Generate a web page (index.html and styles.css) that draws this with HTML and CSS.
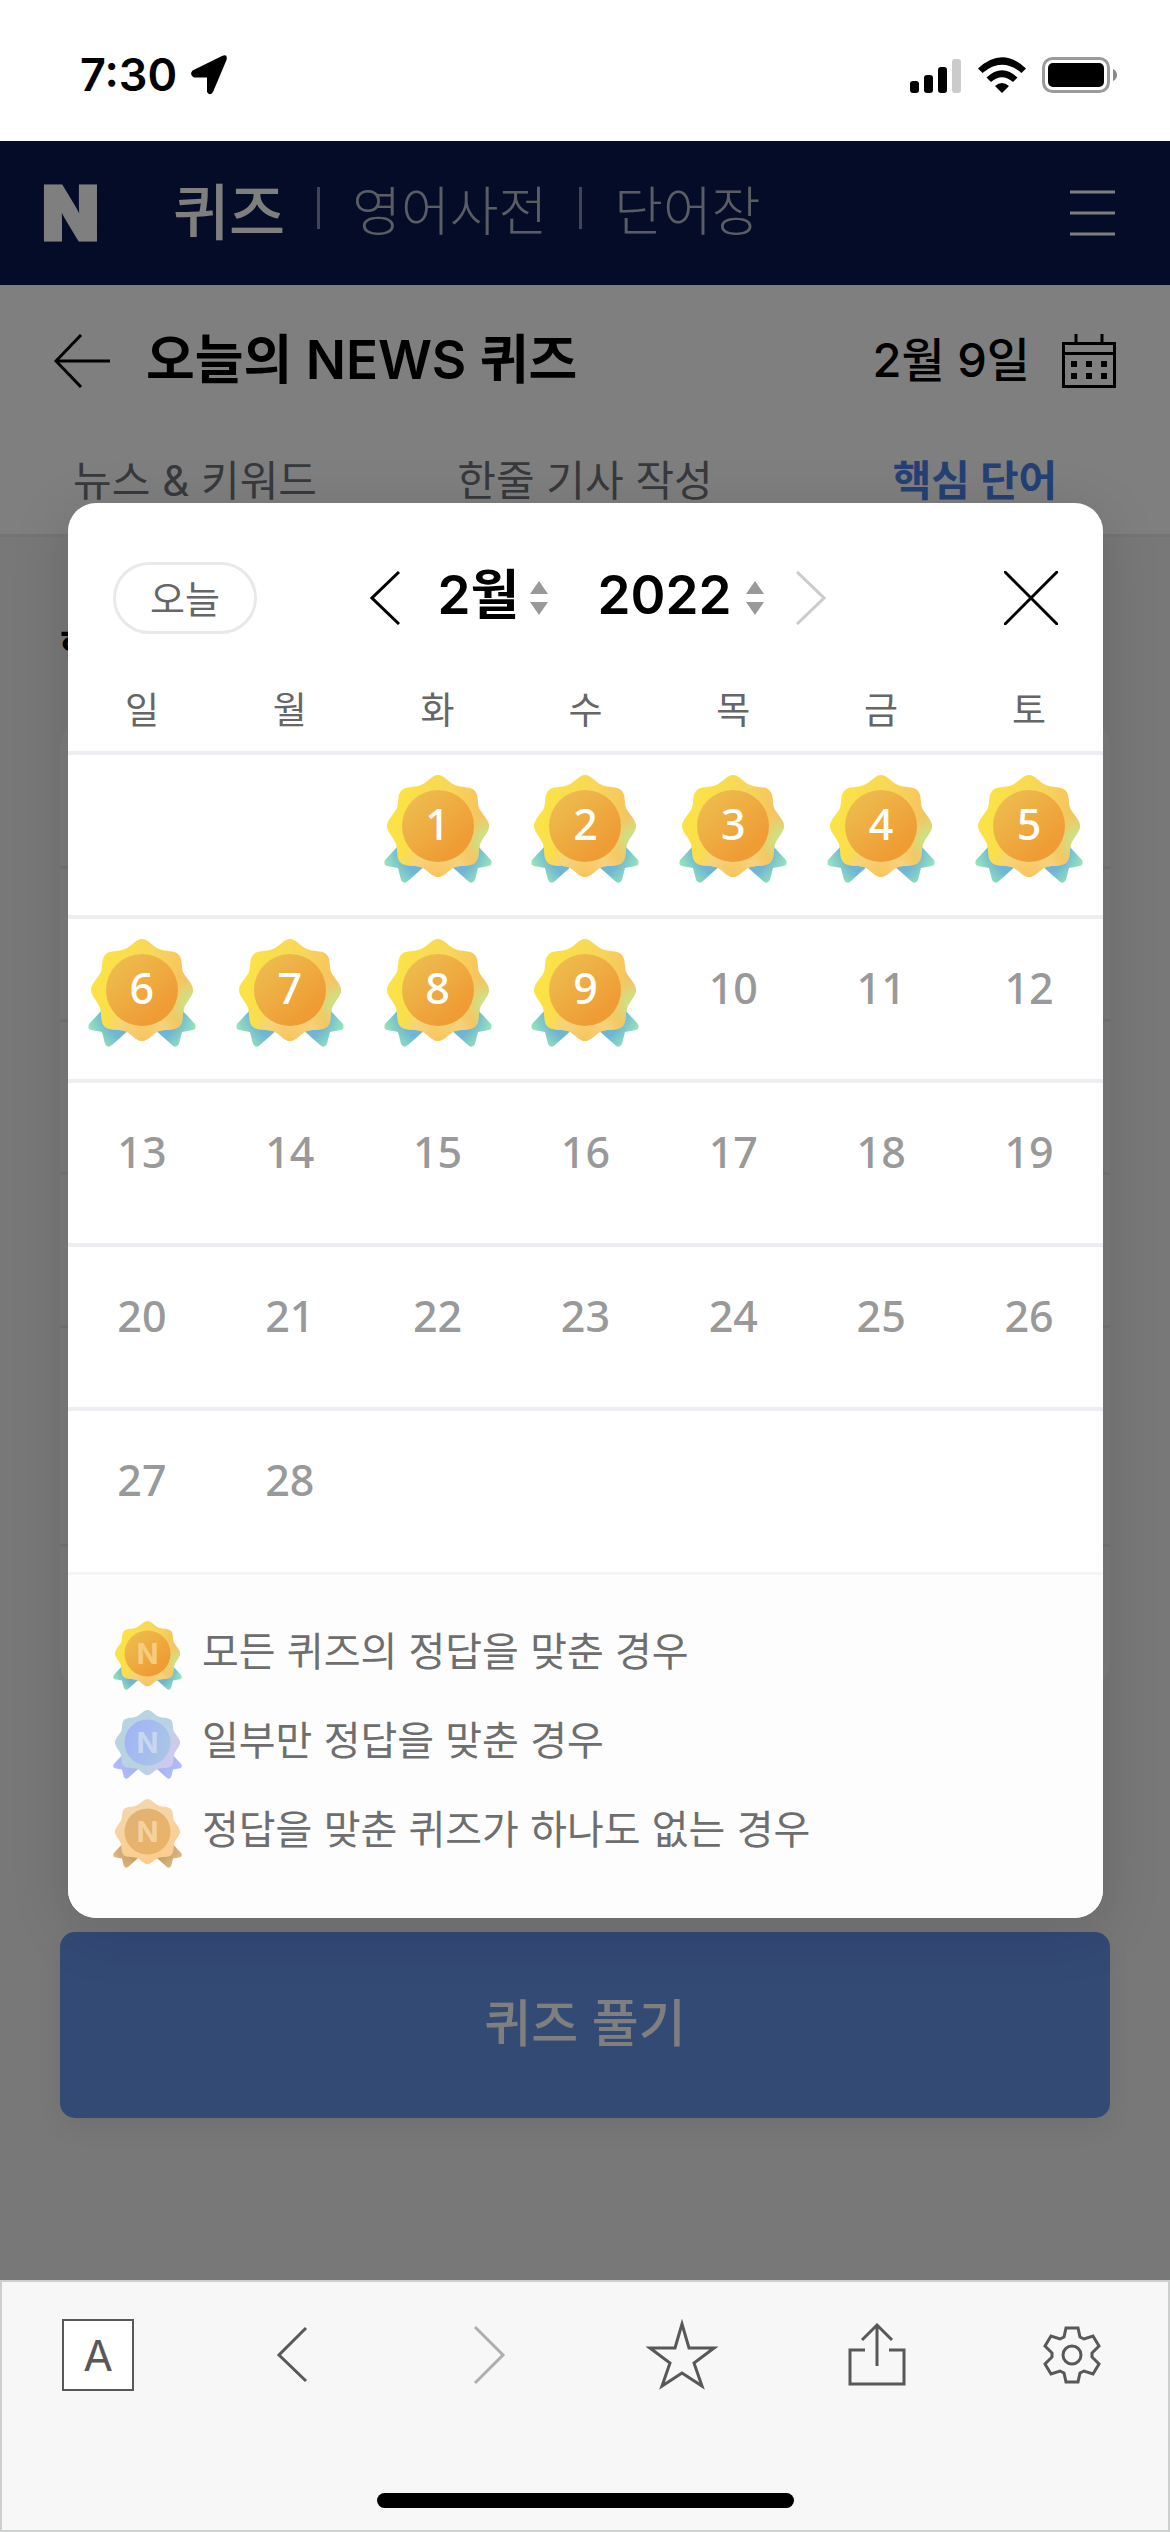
FILE: index.html
```html
<!DOCTYPE html>
<html lang="ko">
<head>
    <meta charset="UTF-8">
    <meta name="viewport" content="width=device-width, initial-scale=1.0">
    <title>오늘의 NEWS 퀴즈</title>
    <link rel="stylesheet" href="styles.css">
</head>
<body>

<!-- Medal shapes -->
<svg class="defs" width="0" height="0" aria-hidden="true">
    <defs>
        <path id="flower" d="M54 0C60 0 64 7 71 10C78 13 86 11 90 15C95 19 93 27 95 33C98 39 105 45 105 51C105 57 98 63 96 69C94 76 96 84 91 88C86 92 78 90 71 92C64 95 60 102 54 102C48 102 44 95 37 92C30 90 22 92 17 88C12 84 14 76 12 69C10 63 3 57 3 51C3 45 10 39 13 33C15 27 13 19 18 15C22 11 30 13 37 10C44 7 48 0 54 0Z"/>
        <path id="ribbons" d="M94 71L107 85Q109 90 105 91L94 93L91 105Q88 110 84 106L66 90ZM14 71L1 85Q-1 90 3 91L14 93L17 105Q20 110 24 106L42 90Z"/>

        <linearGradient id="gold-base" x1="0" y1="0.4" x2="1" y2="0.6">
            <stop offset="0.1" stop-color="#fbe246"/>
            <stop offset="0.55" stop-color="#f7d65a"/>
            <stop offset="0.9" stop-color="#f6c25e"/>
        </linearGradient>
        <radialGradient id="gold-green" cx="1" cy="0.64" r="0.32">
            <stop offset="0" stop-color="#b8ec90"/>
            <stop offset="0.3" stop-color="#cbe386" stop-opacity="0.9"/>
            <stop offset="1" stop-color="#f6c86a" stop-opacity="0"/>
        </radialGradient>
        <radialGradient id="gold-bottom" cx="0.5" cy="1" r="0.4">
            <stop offset="0" stop-color="#f8c45a"/>
            <stop offset="0.6" stop-color="#f6d27c"/>
            <stop offset="1" stop-color="#f6d27c" stop-opacity="0"/>
        </radialGradient>
        <linearGradient id="gold-disc" x1="0.1" y1="0.1" x2="0.8" y2="0.9">
            <stop offset="0" stop-color="#edbd4e"/>
            <stop offset="0.9" stop-color="#ef9c35"/>
        </linearGradient>
        <radialGradient id="gold-ribbon" gradientUnits="userSpaceOnUse" cx="54" cy="66" r="62">
            <stop offset="0.64" stop-color="#6fb6d6"/>
            <stop offset="0.94" stop-color="#98e6b8"/>
        </radialGradient>

        <linearGradient id="blue-base" x1="0" y1="0" x2="1" y2="0.5">
            <stop offset="0.7" stop-color="#b9d3e2"/>
            <stop offset="1" stop-color="#d0c8f0"/>
        </linearGradient>
        <linearGradient id="blue-disc" x1="0" y1="0.3" x2="1" y2="0.7">
            <stop offset="0" stop-color="#a2b3f8"/>
            <stop offset="1" stop-color="#aac6e4"/>
        </linearGradient>
        <radialGradient id="blue-ribbon" gradientUnits="userSpaceOnUse" cx="54" cy="66" r="62">
            <stop offset="0.55" stop-color="#a9b4ee"/>
            <stop offset="0.9" stop-color="#aebdff"/>
        </radialGradient>

        <linearGradient id="bronze-base" x1="0.4" y1="0" x2="0.6" y2="1">
            <stop offset="0" stop-color="#f4d8b0"/>
            <stop offset="1" stop-color="#fbcc8a"/>
        </linearGradient>
        <linearGradient id="bronze-disc" x1="0" y1="0" x2="1" y2="1">
            <stop offset="0" stop-color="#dfb376"/>
            <stop offset="1" stop-color="#edb266"/>
        </linearGradient>
        <radialGradient id="bronze-ribbon" gradientUnits="userSpaceOnUse" cx="54" cy="66" r="62">
            <stop offset="0.55" stop-color="#c89f68"/>
            <stop offset="0.9" stop-color="#dcb684"/>
        </radialGradient>
    </defs>
    <symbol id="medal-gold" viewBox="0 0 108 108">
        <use href="#ribbons" fill="url(#gold-ribbon)"/>
        <use href="#flower" fill="url(#gold-base)"/>
        <use href="#flower" fill="url(#gold-bottom)"/>
        <use href="#flower" fill="url(#gold-green)"/>
        <circle cx="54" cy="51" r="36" fill="url(#gold-disc)"/>
    </symbol>
    <symbol id="medal-blue" viewBox="0 0 108 108">
        <use href="#ribbons" fill="url(#blue-ribbon)"/>
        <use href="#flower" fill="url(#blue-base)"/>
        <circle cx="54" cy="51" r="36" fill="url(#blue-disc)"/>
    </symbol>
    <symbol id="medal-bronze" viewBox="0 0 108 108">
        <use href="#ribbons" fill="url(#bronze-ribbon)"/>
        <use href="#flower" fill="url(#bronze-base)"/>
        <circle cx="54" cy="51" r="36" fill="url(#bronze-disc)"/>
    </symbol>
</svg>

<div class="status-bar">
    <div class="status-time">
        <span>7:30</span>
        <svg width="36" height="40" viewBox="0 0 36 40"><path d="M31 1Q37 -1.500 35.500 5L22 37Q19 41.500 16 37V22.500H3Q-2 20 1.500 15.500Z"/></svg>
    </div>
    <div class="status-icons">
        <svg width="52" height="40" viewBox="0 0 52 40">
            <rect x="0" y="26" width="9" height="12" rx="3"/>
            <rect x="14" y="20" width="9" height="18" rx="3"/>
            <rect x="28" y="12" width="9" height="26" rx="3"/>
            <rect x="42" y="4" width="9" height="34" rx="3" fill="#cbcbcb"/>
        </svg>
        <svg width="48" height="40" viewBox="0 0 48 40">
            <path d="M0 13.500Q24 -9 48 13.500L43.500 18Q24 1.500 4.500 18ZM8.500 22.500Q24 8 39.500 22.500L35 27Q24 17.500 13 27ZM17 31Q24 25 31 31L24 38Z"/>
        </svg>
        <svg width="76" height="40" viewBox="0 0 76 40">
            <rect x="1.500" y="3.500" width="65" height="33" rx="9" fill="none" stroke="#9b9b9b" stroke-width="3"/>
            <rect x="6" y="8" width="56" height="24" rx="5"/>
            <path d="M71 14Q75 16 75 20T71 26Z" fill="#8a8a8a"/>
        </svg>
    </div>
</div>

<div class="screen">
    <header class="gnb">
        <a class="logo" href="#">N</a>
        <nav class="gnb-menu">
            <a class="active" href="#">퀴즈</a>
            <a href="#">영어사전</a>
            <a href="#">단어장</a>
        </nav>
        <button class="menu-btn" type="button" aria-label="메뉴">
            <svg width="46" height="46" viewBox="0 0 46 46" stroke="#fff" stroke-width="3"><path d="M0 2H45M0 23H45M0 44H45"/></svg>
        </button>
    </header>

    <div class="title-bar">
        <button type="button" aria-label="뒤로">
            <svg width="56" height="54" viewBox="0 0 56 54" fill="none" stroke="#000" stroke-width="3"><path d="M27 1L2 27L27 53M2 27H56"/></svg>
        </button>
        <h1>오늘의 NEWS 퀴즈</h1>
        <span class="today">2월 9일</span>
        <button type="button" aria-label="달력">
            <svg width="54" height="54" viewBox="0 0 54 54" fill="none" stroke="#000" stroke-width="3">
                <path d="M1.500 9.500H52.500V52.500H1.500ZM1.500 19.500H52.500M14 0V9M40 0V9"/>
                <path d="M9 30H15M24 30H30M39 30H45M9 42H15M24 42H30M39 42H45" stroke-width="6"/>
            </svg>
        </button>
    </div>

    <nav class="tabs">
        <a href="#">뉴스 &amp; 키워드</a>
        <a href="#">한줄 기사 작성</a>
        <a class="active" href="#">핵심 단어</a>
    </nav>

    <main class="content">
        <h2>핵심 단어</h2>
        <div class="word-list">
            <div class="word"></div>
            <div class="word"></div>
            <div class="word"></div>
            <div class="word"></div>
            <div class="word tall"></div>
            <div class="word"></div>
        </div>
        <button class="quiz-btn" type="button">퀴즈 풀기</button>
    </main>

    <!-- Calendar layer -->
    <div class="dim">
        <section class="calendar">
            <div class="cal-head">
                <button class="btn-today" type="button">오늘</button>
                <div class="cal-nav">
                    <button type="button" aria-label="이전 달">
                        <svg width="30" height="54" viewBox="0 0 30 54" fill="none" stroke="#000" stroke-width="3"><path d="M29 1L2 27L29 53"/></svg>
                    </button>
                    <div class="picker month">
                        <select aria-label="월"><option>2월</option></select>
                        <svg width="18" height="34" viewBox="0 0 18 34" fill="#999"><path d="M9 0L18 13H0ZM9 34L18 21H0Z"/></svg>
                    </div>
                    <div class="picker year">
                        <select aria-label="년"><option>2022</option></select>
                        <svg width="18" height="34" viewBox="0 0 18 34" fill="#999"><path d="M9 0L18 13H0ZM9 34L18 21H0Z"/></svg>
                    </div>
                    <button type="button" aria-label="다음 달">
                        <svg width="30" height="54" viewBox="0 0 30 54" fill="none" stroke="#ccc" stroke-width="3"><path d="M1 1L28 27L1 53"/></svg>
                    </button>
                </div>
                <button type="button" aria-label="닫기">
                    <svg width="54" height="54" viewBox="0 0 54 54" stroke="#000" stroke-width="3"><path d="M0 0L54 54M54 0L0 54"/></svg>
                </button>
            </div>

            <table>
                <thead>
                    <tr><th>일</th><th>월</th><th>화</th><th>수</th><th>목</th><th>금</th><th>토</th></tr>
                </thead>
                <tbody>
                    <tr>
                        <td></td>
                        <td></td>
                        <td><div class="medal"><svg><use href="#medal-gold"/></svg><span>1</span></div></td>
                        <td><div class="medal"><svg><use href="#medal-gold"/></svg><span>2</span></div></td>
                        <td><div class="medal"><svg><use href="#medal-gold"/></svg><span>3</span></div></td>
                        <td><div class="medal"><svg><use href="#medal-gold"/></svg><span>4</span></div></td>
                        <td><div class="medal"><svg><use href="#medal-gold"/></svg><span>5</span></div></td>
                    </tr>
                    <tr>
                        <td><div class="medal"><svg><use href="#medal-gold"/></svg><span>6</span></div></td>
                        <td><div class="medal"><svg><use href="#medal-gold"/></svg><span>7</span></div></td>
                        <td><div class="medal"><svg><use href="#medal-gold"/></svg><span>8</span></div></td>
                        <td><div class="medal"><svg><use href="#medal-gold"/></svg><span>9</span></div></td>
                        <td>10</td>
                        <td>11</td>
                        <td>12</td>
                    </tr>
                    <tr><td>13</td><td>14</td><td>15</td><td>16</td><td>17</td><td>18</td><td>19</td></tr>
                    <tr><td>20</td><td>21</td><td>22</td><td>23</td><td>24</td><td>25</td><td>26</td></tr>
                    <tr><td>27</td><td>28</td><td></td><td></td><td></td><td></td><td></td></tr>
                </tbody>
            </table>

            <ul class="legend">
                <li><div class="medal gold"><svg><use href="#medal-gold"/></svg><span>N</span></div>모든 퀴즈의 정답을 맞춘 경우</li>
                <li><div class="medal blue"><svg><use href="#medal-blue"/></svg><span>N</span></div>일부만 정답을 맞춘 경우</li>
                <li><div class="medal bronze"><svg><use href="#medal-bronze"/></svg><span>N</span></div>정답을 맞춘 퀴즈가 하나도 없는 경우</li>
            </ul>
        </section>
    </div>
</div>

<footer class="toolbar">
    <div class="toolbar-row">
        <button class="lang-btn" type="button">A</button>
        <button type="button" aria-label="뒤로 가기">
            <svg width="72" height="72" viewBox="0 0 72 72"><path d="M49 9L22 36L49 62"/></svg>
        </button>
        <button type="button" aria-label="앞으로 가기" disabled>
            <svg width="72" height="72" viewBox="0 0 72 72"><path d="M23 8L51 36L23 64"/></svg>
        </button>
        <button type="button" aria-label="즐겨찾기">
            <svg width="72" height="72" viewBox="0 0 72 72"><path d="M36 5L43 29H68L48 44L56 67L36 54L16 67L24 44L4 29H29Z"/></svg>
        </button>
        <button type="button" aria-label="공유">
            <svg width="72" height="72" viewBox="0 0 72 72"><path d="M24 31H9V65H63V31H48M36 47V6M21 21L36 6L51 21"/></svg>
        </button>
        <button type="button" aria-label="설정">
            <svg width="72" height="72" viewBox="0 0 72 72"><path d="M30 9H42L44 18L48 20L57 17L63 27L56 34V38L63 45L57 55L48 52L44 54L42 63H30L28 54L24 52L15 55L9 45L16 38V34L9 27L15 17L24 20L28 18Z"/><circle cx="36" cy="36" r="9"/></svg>
        </button>
    </div>
    <div class="home-indicator"></div>
</footer>

</body>
</html>
```
FILE: styles.css
```css
/* Global Styles */
* {
    margin: 0;
    padding: 0;
    box-sizing: border-box;
}

body {
    display: flex;
    flex-direction: column;
    min-height: 100vh;
    background-color: #fff;
    color: #000;
    font-family: Inter, "Noto Sans CJK KR", sans-serif;
}

a {
    color: inherit;
    text-decoration: none;
}

button,
select {
    font-family: inherit;
    color: inherit;
    background: none;
    border: none;
    cursor: pointer;
}

svg {
    display: block;
}

.defs {
    position: absolute;
}

/* Status bar */
.status-bar {
    display: flex;
    justify-content: space-between;
    align-items: center;
    height: 141px;
    padding: 8px 52px 0 80px;
}

.status-time {
    display: flex;
    align-items: center;
    gap: 14px;
    font-size: 45px;
    font-weight: 600;
}

.status-icons {
    display: flex;
    align-items: center;
    gap: 16px;
}

/* Page */
.screen {
    position: relative;
    flex: 1;
    background-color: #f1f1f2;
}

.gnb {
    display: flex;
    align-items: center;
    height: 144px;
    padding: 0 54px 0 42px;
    background-color: #0b1950;
    color: #fff;
}

.logo {
    font-size: 74px;
    font-weight: 900;
    -webkit-text-stroke: 3px #fff;
}

.gnb-menu {
    display: flex;
    align-items: center;
    flex: 1;
    padding: 0 0 10px 74px;
    font-size: 53px;
    font-weight: 300;
}

.gnb-menu a {
    opacity: 0.7;
}

.gnb-menu a + a {
    display: flex;
    align-items: center;
}

.gnb-menu a + a::before {
    content: "";
    width: 3px;
    height: 42px;
    margin: 0 32px;
    background-color: #fff;
    opacity: 0.7;
}

.gnb-menu .active {
    font-size: 61px;
    font-weight: 500;
    opacity: 1;
}

.title-bar {
    display: flex;
    align-items: center;
    height: 152px;
    padding: 0 54px;
    background-color: #fff;
}

.title-bar h1 {
    flex: 1;
    padding: 0 0 10px 36px;
    font-size: 53px;
    font-weight: 600;
}

.today {
    margin-right: 32px;
    padding-bottom: 10px;
    font-size: 47px;
    font-weight: 500;
}

.tabs {
    display: grid;
    grid-template-columns: repeat(3, 1fr);
    height: 100px;
    padding-bottom: 8px;
    background-color: #fff;
    border-bottom: 3px solid #e8e8e8;
    color: #70737a;
    font-size: 42px;
    line-height: 88px;
    text-align: center;
}

.tabs .active {
    color: #4a80e8;
    font-weight: 700;
}

.content {
    padding: 84px 60px;
}

.content h2 {
    height: 101px;
    font-size: 42px;
    line-height: 54px;
    font-weight: 700;
}

.word-list {
    background-color: #f8f9fb;
    border-radius: 24px;
}

.word {
    height: 153px;
}

.word:first-child,
.word:last-child {
    height: 144px;
}

.word.tall {
    height: 219px;
}

.word + .word {
    border-top: 3px solid #e9eaee;
}

.quiz-btn {
    width: 100%;
    height: 186px;
    margin-top: 244px;
    padding-bottom: 10px;
    border-radius: 15px;
    background-color: #6694ea;
    box-shadow: 0 10px 30px rgba(0, 0, 0, 0.08);
    color: #fff;
    font-size: 51px;
    font-weight: 500;
}

/* Calendar layer */
.dim {
    position: absolute;
    top: 0;
    right: 0;
    bottom: 0;
    left: 0;
    padding: 362px 67px 0 68px;
    background-color: rgba(0, 0, 0, 0.5);
}

.calendar {
    overflow: hidden;
    border-radius: 28px;
    background-color: #fff;
    box-shadow: 0 12px 60px rgba(0, 0, 0, 0.14);
}

.cal-head {
    display: flex;
    justify-content: space-between;
    align-items: center;
    height: 190px;
    padding: 0 45px;
}

.btn-today {
    width: 144px;
    height: 72px;
    padding-bottom: 4px;
    border: 3px solid #e7e9ea;
    border-radius: 36px;
    color: #666;
    font-size: 38px;
}

.cal-nav {
    display: flex;
    align-items: center;
    padding-right: 66px;
}

.picker {
    display: flex;
    align-items: center;
    margin-left: 38px;
}

.picker select {
    padding-bottom: 6px;
    appearance: none;
    font-size: 53px;
    font-weight: 600;
}

.month select {
    width: 92px;
}

.year {
    margin: 0 32px 0 50px;
}

.year select {
    width: 148px;
}

.calendar table {
    width: 100%;
    border-collapse: collapse;
    table-layout: fixed;
}

.calendar th {
    height: 60px;
    padding-bottom: 22px;
    border-bottom: 4px solid #eceef2;
    color: #666;
    font-size: 37px;
    font-weight: 400;
    line-height: 36px;
}

.calendar td {
    height: 164px;
    padding-top: 20px;
    border-bottom: 4px solid #eceef2;
    color: #999;
    font-family: "Noto Sans", sans-serif;
    font-size: 43px;
    font-weight: 500;
    line-height: 98px;
    text-align: center;
    vertical-align: top;
}

.calendar tbody tr:last-child td {
    border-bottom: 3px solid #f3f5f6;
}

/* Number or letter sits on top of the medal */
.medal {
    display: grid;
    width: 108px;
    height: 108px;
    margin: 0 auto;
    color: #fff;
}

.medal svg,
.medal span {
    grid-area: 1 / 1;
    width: 100%;
    height: 100%;
}

.legend {
    display: flex;
    flex-direction: column;
    gap: 20px;
    padding: 46px 45px 50px;
    background-color: #fdfdfd;
    color: #6e6e6e;
    font-size: 40px;
    line-height: 62px;
    list-style: none;
}

.legend li {
    display: flex;
    gap: 20px;
}

.legend .medal {
    width: 69px;
    height: 69px;
    margin: 0;
    font-size: 29px;
    font-weight: 700;
    line-height: 66px;
    text-align: center;
}

.gold span {
    color: #f8cc80;
}

.blue span {
    color: #c8d6ee;
}

.bronze span {
    color: #f3d2a0;
}

/* Bottom toolbar */
.toolbar {
    padding: 37px 24px 22px;
    border: 2px solid #cdcfcf;
    background-color: #f7f7f8;
}

.toolbar-row {
    display: flex;
    justify-content: space-between;
    padding: 0 36px;
}

.toolbar-row svg {
    fill: none;
    stroke: #585858;
    stroke-width: 3;
}

.toolbar-row button:disabled {
    opacity: 0.45;
}

.lang-btn {
    width: 72px;
    height: 72px;
    border: 2px solid #585858;
    background-color: #fff;
    color: #585858;
    font-size: 43px;
}

.home-indicator {
    width: 417px;
    max-width: 60%;
    height: 15px;
    margin: 102px auto 0;
    border-radius: 8px;
    background-color: #000;
}
```
